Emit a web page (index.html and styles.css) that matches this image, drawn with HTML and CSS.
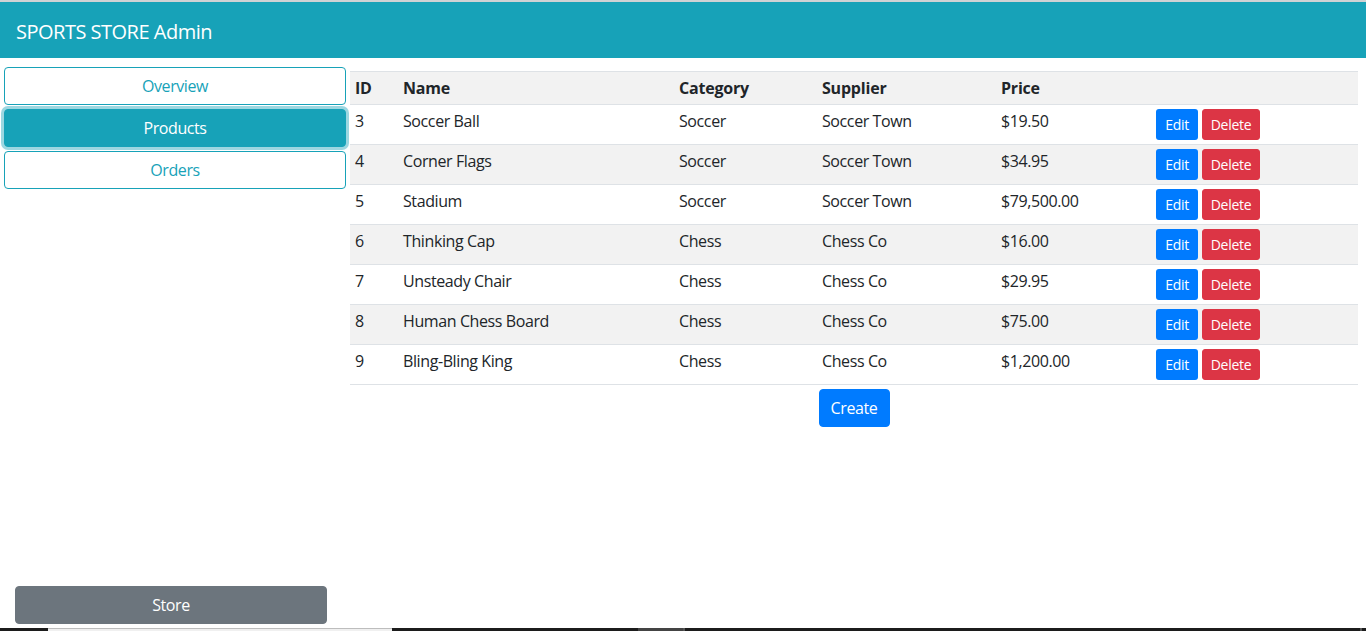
FILE: index.html
```html
<!DOCTYPE html>
<html lang="en">
<head>
<meta charset="utf-8">
<title>SPORTS STORE Admin</title>
<link rel="stylesheet" href="styles.css">
</head>
<body>
<div class="page">
  <div class="topline"></div>
  <header class="header">SPORTS STORE Admin</header>
  <div class="content">
    <aside class="sidebar">
      <div class="nav">
        <button class="btn btn-outline">Overview</button>
        <button class="btn btn-info active">Products</button>
        <button class="btn btn-outline">Orders</button>
      </div>
      <button class="btn btn-secondary store">Store</button>
    </aside>
    <main class="main">
      <table class="table">
        <colgroup>
          <col class="c-id"><col class="c-name"><col class="c-cat"><col class="c-sup"><col class="c-price"><col class="c-act">
        </colgroup>
        <thead>
          <tr><th>ID</th><th>Name</th><th>Category</th><th>Supplier</th><th>Price</th><th></th></tr>
        </thead>
        <tbody>
          <tr><td>3</td><td>Soccer Ball</td><td>Soccer</td><td>Soccer Town</td><td>$19.50</td><td><div class="actions"><button class="btn-sm btn-primary">Edit</button><button class="btn-sm btn-danger">Delete</button></div></td></tr>
          <tr class="alt"><td>4</td><td>Corner Flags</td><td>Soccer</td><td>Soccer Town</td><td>$34.95</td><td><div class="actions"><button class="btn-sm btn-primary">Edit</button><button class="btn-sm btn-danger">Delete</button></div></td></tr>
          <tr><td>5</td><td>Stadium</td><td>Soccer</td><td>Soccer Town</td><td>$79,500.00</td><td><div class="actions"><button class="btn-sm btn-primary">Edit</button><button class="btn-sm btn-danger">Delete</button></div></td></tr>
          <tr class="alt"><td>6</td><td>Thinking Cap</td><td>Chess</td><td>Chess Co</td><td>$16.00</td><td><div class="actions"><button class="btn-sm btn-primary">Edit</button><button class="btn-sm btn-danger">Delete</button></div></td></tr>
          <tr><td>7</td><td>Unsteady Chair</td><td>Chess</td><td>Chess Co</td><td>$29.95</td><td><div class="actions"><button class="btn-sm btn-primary">Edit</button><button class="btn-sm btn-danger">Delete</button></div></td></tr>
          <tr class="alt"><td>8</td><td>Human Chess Board</td><td>Chess</td><td>Chess Co</td><td>$75.00</td><td><div class="actions"><button class="btn-sm btn-primary">Edit</button><button class="btn-sm btn-danger">Delete</button></div></td></tr>
          <tr><td>9</td><td>Bling-Bling King</td><td>Chess</td><td>Chess Co</td><td>$1,200.00</td><td><div class="actions"><button class="btn-sm btn-primary">Edit</button><button class="btn-sm btn-danger">Delete</button></div></td></tr>
        </tbody>
      </table>
      <div class="create-wrap"><button class="btn btn-primary create">Create</button></div>
    </main>
  </div>
  <div class="strip">
    <span class="s-black s1"></span><span class="s-light s2"></span><span class="s-black s3"></span><span class="s-gray s4"></span><span class="s-tick"></span><span class="s-black s5"></span><span class="s-tick"></span><span class="s-black s6"></span>
  </div>
</div>
</body>
</html>
```

FILE: styles.css
```css
* { box-sizing: border-box; }
html, body { margin: 0; padding: 0; }
body {
  font-family: "Open Sans", "Noto Sans", "Liberation Sans", sans-serif;
  font-size: 16px;
  line-height: 24px;
  color: #212529;
  background: #fff;
  letter-spacing: -0.4px;
}
.page {
  height: 100vh;
  display: flex;
  flex-direction: column;
  overflow: hidden;
}
.topline { height: 2px; background: #cfd2d4; flex: none; }
.header {
  flex: none;
  height: 56px;
  background: #17a2b8;
  color: #fff;
  font-size: 20px;
  line-height: 60px;
  padding-left: 16px;
  letter-spacing: -0.5px;
  overflow: hidden;
}
.content {
  flex: 1;
  display: grid;
  grid-template-columns: 350px 1fr;
  min-height: 0;
}
.sidebar {
  display: flex;
  flex-direction: column;
  padding: 9px 4px 4px 4px;
}
.nav { display: flex; flex-direction: column; gap: 4px; }
.btn {
  font-family: inherit;
  font-size: 16px;
  line-height: 24px;
  letter-spacing: -0.4px;
  padding: 6px 12px;
  border: 1px solid transparent;
  border-radius: 4px;
  text-align: center;
  cursor: pointer;
  height: 38px;
}
.btn-outline { background: #fff; color: #17a2b8; border-color: #17a2b8; }
.btn-info { background: #17a2b8; color: #fff; border-color: #17a2b8; }
.btn-info.active { box-shadow: 0 0 0 3px rgba(58,176,195,0.5); }
.btn-secondary { background: #6c757d; color: #fff; border-color: #6c757d; }
.btn-primary { background: #007bff; color: #fff; border-color: #007bff; }
.store {
  margin-top: auto;
  margin-left: 11px;
  width: 312px;
}
.main { padding: 13px 8px 0 0; }
.table {
  width: 100%;
  border-collapse: collapse;
  table-layout: fixed;
  border-bottom: 1px solid #dee2e6;
}
.c-id { width: 48px; }
.c-name { width: 276px; }
.c-cat { width: 143px; }
.c-sup { width: 179px; }
.c-price { width: 155px; }
.c-act { width: auto; }
.table th, .table td {
  text-align: left;
  vertical-align: top;
  border-top: 1px solid #dee2e6;
  white-space: nowrap;
}
.table th {
  font-weight: 700;
  padding: 4px 5px;
  letter-spacing: -0.2px;
}
.table thead tr { background: #f2f2f2; }
.table td { padding: 4px 5px; height: 40px; }
.table tr.alt { background: #f2f2f2; }
.actions { display: flex; gap: 4px; }
.btn-sm {
  font-family: inherit;
  font-size: 14px;
  line-height: 21px;
  letter-spacing: -0.3px;
  padding: 4px 8px;
  height: 31px;
  border: 1px solid transparent;
  border-radius: 3px;
  cursor: pointer;
}
.btn-sm.btn-primary { width: 42px; padding: 4px 0; }
.btn-danger { background: #dc3545; color: #fff; border-color: #dc3545; width: 58px; padding: 4px 0; }
.create-wrap { display: flex; justify-content: center; padding-top: 4px; }
.create { width: 71px; padding: 6px 0; }
.strip { flex: none; height: 3px; display: flex; }
.strip span { display: block; height: 3px; }
.s-black { background: #1c1c1c; }
.s1 { width: 48px; }
.s2 { width: 344px; background: #f0f0f0; border-top: 1px solid #bdbdbd; }
.s3 { width: 246px; }
.s4 { width: 45px; background: #444; }
.s-tick { width: 2px; background: #555; }
.s5 { width: 675px; }
.s6 { flex: 1; }
```
